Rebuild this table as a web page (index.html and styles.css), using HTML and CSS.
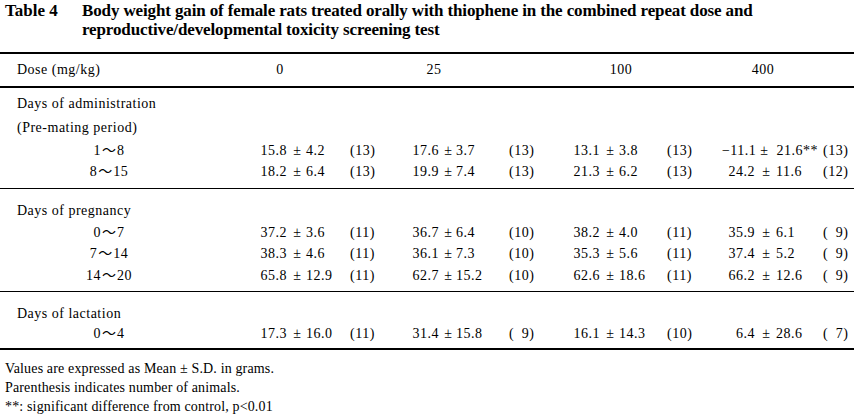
FILE: index.html
```html
<!DOCTYPE html>
<html lang="en">
<head>
<meta charset="utf-8">
<title>Table 4</title>
<link rel="stylesheet" href="styles.css">
</head>
<body>
<div class="page">
  <div class="caption">
    <div class="cap-no">Table 4</div>
    <div class="cap-text">Body weight gain of female rats treated orally with thiophene in the combined repeat dose and<br>reproductive/developmental toxicity screening test</div>
  </div>

  <div class="tbl">
    <div class="head">
      <div class="lab">Dose (mg/kg)</div>
      <div class="h h0">0</div>
      <div class="h h25">25</div>
      <div class="h h100">100</div>
      <div class="h h400">400</div>
    </div>

    <div class="sec sec1">
      <div class="row r-23"><div class="lab">Days of administration</div></div>
      <div class="row r-25"><div class="lab">(Pre-mating period)</div></div>
      <div class="row r-21">
        <div class="lab sub">1<span class="tl">～</span>8</div>
        <div class="m">15.8</div><div class="pm">±</div><div class="sd">4.2</div><div class="n">(13)</div>
        <div class="m">17.6</div><div class="pm">±</div><div class="sd">3.7</div><div class="n">(13)</div>
        <div class="m">13.1</div><div class="pm">±</div><div class="sd">3.8</div><div class="n">(13)</div>
        <div class="wide">−11.1&nbsp;±&nbsp;&nbsp;21.6**</div><div class="n">(13)</div>
      </div>
      <div class="row r-22">
        <div class="lab sub">8<span class="tl">～</span>15</div>
        <div class="m">18.2</div><div class="pm">±</div><div class="sd">6.4</div><div class="n">(13)</div>
        <div class="m">19.9</div><div class="pm">±</div><div class="sd">7.4</div><div class="n">(13)</div>
        <div class="m">21.3</div><div class="pm">±</div><div class="sd">6.2</div><div class="n">(13)</div>
        <div class="m">24.2</div><div class="pm">±</div><div class="sd">11.6</div><div class="n">(12)</div>
      </div>
    </div>

    <div class="sec sec2">
      <div class="row r-22"><div class="lab">Days of pregnancy</div></div>
      <div class="row r-21">
        <div class="lab sub">0<span class="tl">～</span>7</div>
        <div class="m">37.2</div><div class="pm">±</div><div class="sd">3.6</div><div class="n">(11)</div>
        <div class="m">36.7</div><div class="pm">±</div><div class="sd">6.4</div><div class="n">(10)</div>
        <div class="m">38.2</div><div class="pm">±</div><div class="sd">4.0</div><div class="n">(11)</div>
        <div class="m">35.9</div><div class="pm">±</div><div class="sd">6.1</div><div class="n">(&#8199;9)</div>
      </div>
      <div class="row r-22">
        <div class="lab sub">7<span class="tl">～</span>14</div>
        <div class="m">38.3</div><div class="pm">±</div><div class="sd">4.6</div><div class="n">(11)</div>
        <div class="m">36.1</div><div class="pm">±</div><div class="sd">7.3</div><div class="n">(10)</div>
        <div class="m">35.3</div><div class="pm">±</div><div class="sd">5.6</div><div class="n">(11)</div>
        <div class="m">37.4</div><div class="pm">±</div><div class="sd">5.2</div><div class="n">(&#8199;9)</div>
      </div>
      <div class="row r-21">
        <div class="lab sub">14<span class="tl">～</span>20</div>
        <div class="m">65.8</div><div class="pm">±</div><div class="sd">12.9</div><div class="n">(11)</div>
        <div class="m">62.7</div><div class="pm">±</div><div class="sd">15.2</div><div class="n">(10)</div>
        <div class="m">62.6</div><div class="pm">±</div><div class="sd">18.6</div><div class="n">(11)</div>
        <div class="m">66.2</div><div class="pm">±</div><div class="sd">12.6</div><div class="n">(&#8199;9)</div>
      </div>
    </div>

    <div class="sec sec3">
      <div class="row r-21"><div class="lab">Days of lactation</div></div>
      <div class="row r-20">
        <div class="lab sub">0<span class="tl">～</span>4</div>
        <div class="m">17.3</div><div class="pm">±</div><div class="sd">16.0</div><div class="n">(11)</div>
        <div class="m">31.4</div><div class="pm">±</div><div class="sd">15.8</div><div class="n">(&#8199;9)</div>
        <div class="m">16.1</div><div class="pm">±</div><div class="sd">14.3</div><div class="n">(10)</div>
        <div class="m">6.4</div><div class="pm">±</div><div class="sd">28.6</div><div class="n">(&#8199;7)</div>
      </div>
    </div>
  </div>

  <div class="notes">
    <p>Values are expressed as Mean ± S.D. in grams.</p>
    <p>Parenthesis indicates number of animals.</p>
    <p>**: significant difference from control, p&lt;0.01</p>
  </div>
</div>
</body>
</html>
```

FILE: styles.css
```css
html, body {
  margin: 0;
  padding: 0;
  background: #ffffff;
}

body {
  color: #000000;
  font-family: "Liberation Serif", "Noto Sans CJK JP", serif;
}

.page {
  width: 854px;
}

/* caption */
.caption {
  display: flex;
  padding-top: 1px;
  font-weight: bold;
  font-size: 17px;
  line-height: 19px;
  height: 38px;
}

.cap-no {
  width: 77px;
  padding-left: 5px;
  flex: none;
}

.cap-text {
  flex: 1;
  letter-spacing: -0.13px;
}

/* table */
.tbl {
  margin-top: 13px;
  border-top: 2px solid #000;
  border-bottom: 2px solid #000;
  font-size: 14px;
  letter-spacing: 0.5px;
}

.head {
  display: grid;
  grid-template-columns: 250px 60px 94px 60px 127px 60px 82px 60px 61px;
  height: 32px;
  line-height: 32px;
  border-bottom: 2px solid #000;
}

.head .h { text-align: center; }
.head .h0 { grid-column: 2; }
.head .h25 { grid-column: 4; }
.head .h100 { grid-column: 6; }
.head .h400 { grid-column: 8; }

.lab {
  padding-left: 17px;
  white-space: nowrap;
}

.sec {
  border-top: 1px solid #000;
}

.sec1 {
  border-top: none;
  padding-top: 4px;
  padding-bottom: 5px;
}

.sec2 {
  padding-top: 11px;
  padding-bottom: 5px;
}

.sec3 {
  padding-top: 11px;
  padding-bottom: 4px;
}

.row {
  display: grid;
  grid-template-columns:
    250px
    38px 18px 44px 40px
    50px 16px 53px 40px
    52px 18px 48px 33px
    56px 20px 47px 31px;
  white-space: nowrap;
  overflow: visible;
}

.r-20 { line-height: 20px; height: 20px; }
.r-21 { line-height: 21px; height: 21px; }
.r-22 { line-height: 22px; height: 22px; }
.r-23 { line-height: 23px; height: 23px; }
.r-25 { line-height: 25px; height: 25px; }

.row .lab { grid-column: 1; }

.lab.sub {
  padding-left: 0;
  padding-right: 32px;
  text-align: center;
}

.tl {
  font-family: "Noto Sans CJK JP", sans-serif;
  margin: 0 1px;
  letter-spacing: 0;
  line-height: 0;
}

.m {
  text-align: right;
  padding-right: 1px;
}

.pm {
  text-align: center;
  letter-spacing: 0;
}

.sd {
  text-align: left;
}

.n {
  text-align: left;
}

.wide {
  grid-column: 14 / span 3;
  text-align: right;
  padding-right: 5px;
}

/* notes */
.notes {
  padding-top: 9px;
  padding-left: 5px;
  font-size: 14px;
  line-height: 19px;
  letter-spacing: 0.15px;
}

.notes p {
  margin: 0;
}
```
